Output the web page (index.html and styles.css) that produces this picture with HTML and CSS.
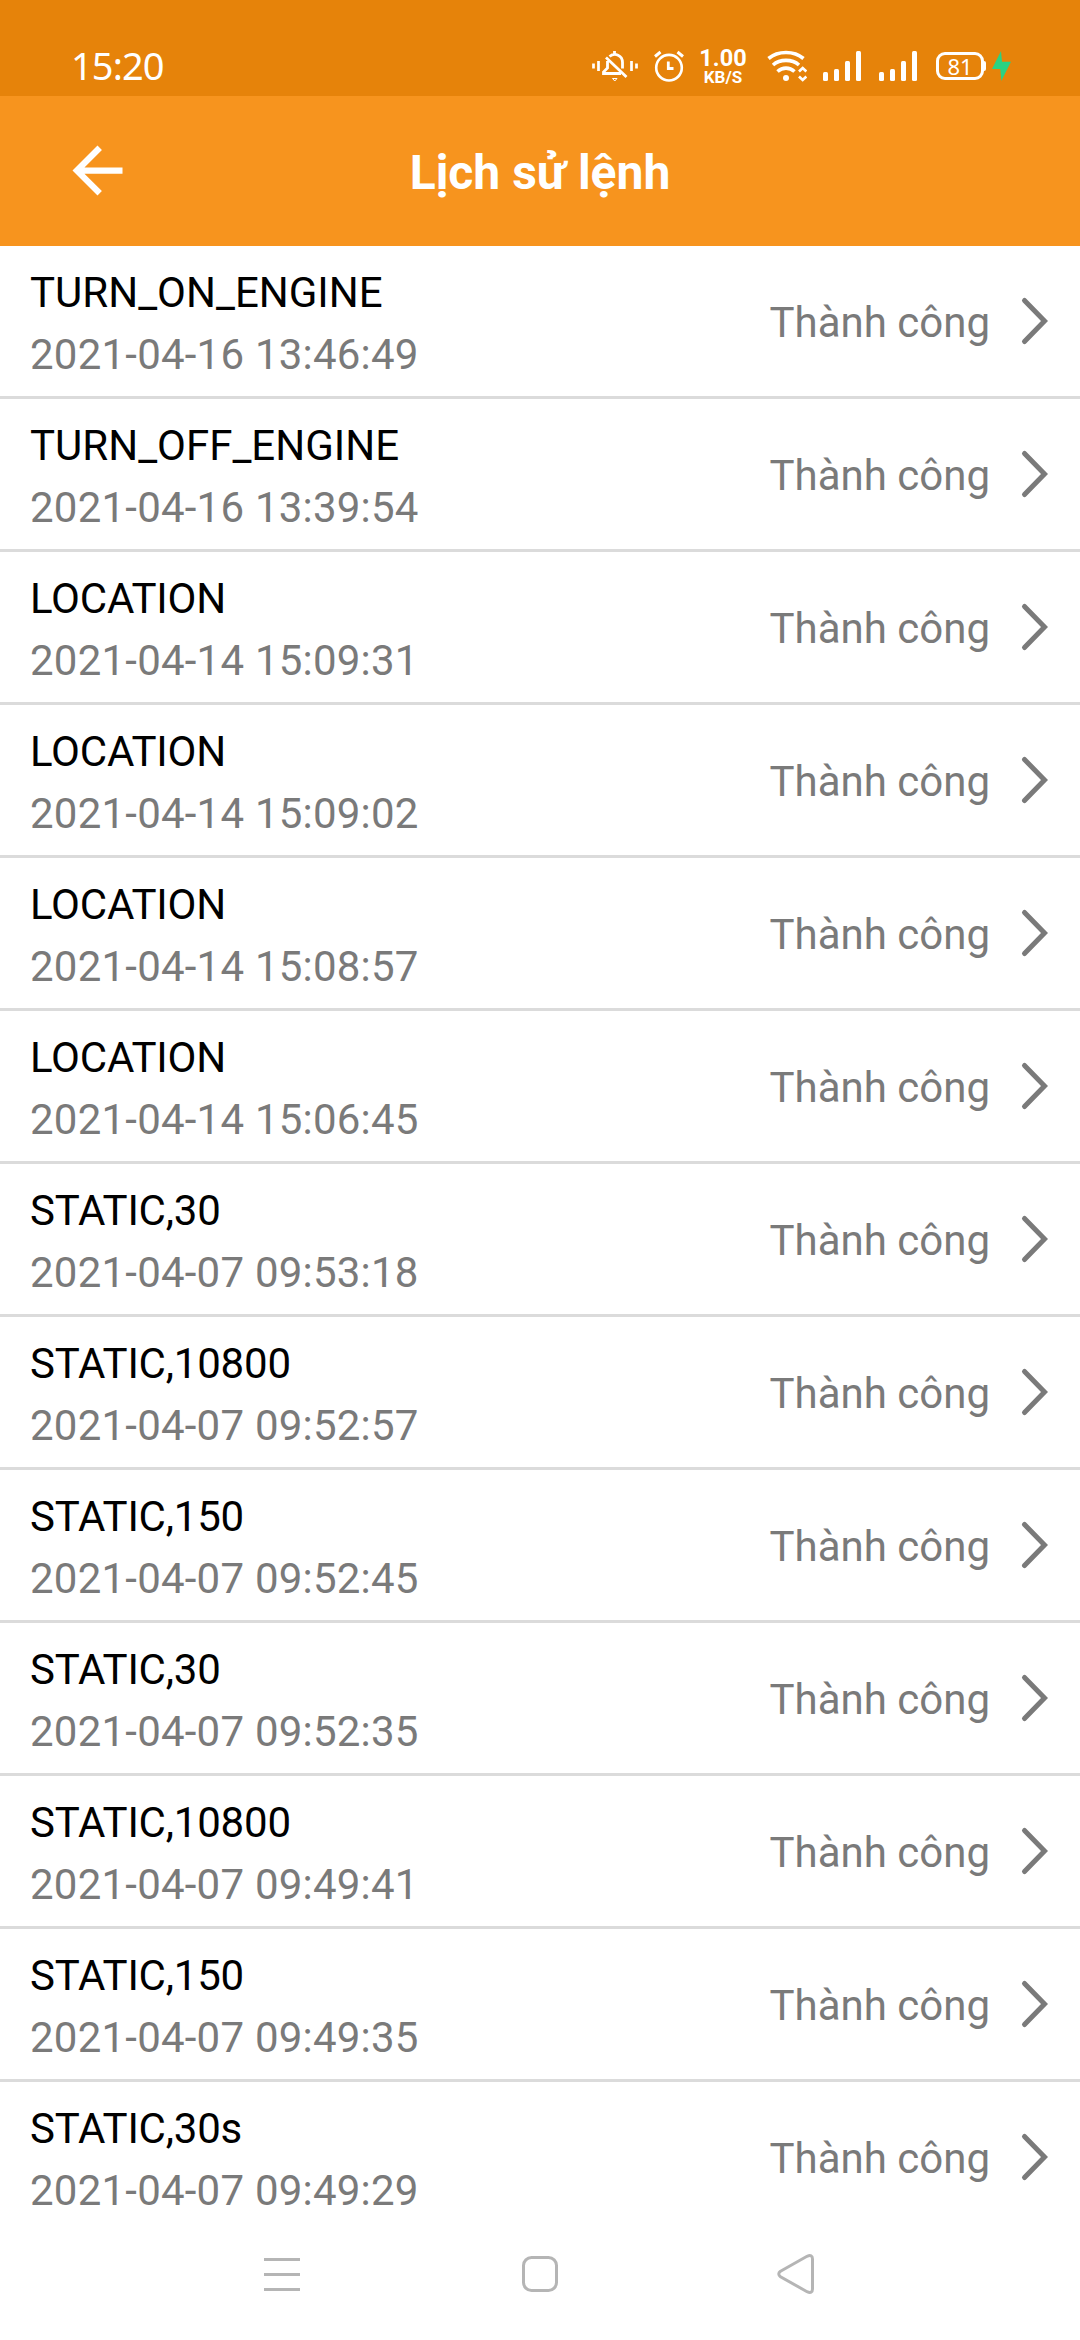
FILE: index.html
```html
<!DOCTYPE html>
<html lang="vi">
<head>
<meta charset="utf-8">
<title>Lịch sử lệnh</title>
<link rel="stylesheet" href="styles.css">
</head>
<body>
<svg class="defs" width="0" height="0" aria-hidden="true">
  <symbol id="chevron" viewBox="0 0 30 50"><path d="M4.500 4.500 24.500 25 4.500 45.500" fill="none" stroke="#7a7a7a" stroke-width="5" stroke-linecap="round" stroke-linejoin="miter"/></symbol>
  <symbol id="signal" viewBox="0 0 38 30"><rect y="21" width="5" height="9" rx="1.500"/><rect x="11" y="18" width="5" height="12" rx="1.500"/><rect x="22" y="10" width="5" height="20" rx="1.500"/><rect x="33" width="5" height="30" rx="1.500"/></symbol>
</svg>
<div class="screen">
  <div class="statusbar">
    <span class="clock">15:20</span>
    <div class="indicators">
      <svg class="bell" viewBox="0 0 46 32" width="46" height="32">
        <path d="M1.500 13.500v5M6.500 11v10M39.500 11v10M44.500 13.500v5" stroke-width="2.700"/>
        <path d="M22.500 1v3M17.500 6.500C23 2 30.500 5.500 30.500 12.500v6M15.500 11v7L11.500 22v1.500H29M14 7.500 34.500 27" stroke-width="2.800"/>
        <path d="M20.500 28.500h4.500l-2.200 2.500z" stroke-width="1"/>
      </svg>
      <svg class="alarm" viewBox="0 0 30 32" width="30" height="32">
        <circle cx="15" cy="17.700" r="12.800" stroke-width="2.600"/>
        <path d="M1 6.500 6.500 2M23.500 2 29 6.500" stroke-width="3"/><path d="M14.300 11.500V18.500H19.500" stroke-width="2.800"/>
      </svg>
      <div class="speed"><b>1.00</b><b class="unit">KB/S</b></div>
      <svg class="wifi" viewBox="0 0 40 32" width="40" height="32">
        <path d="M1.500 8.500C11 .5 27 .5 36.500 8.500M6 15C13 8.800 25 8.800 32 15M10.500 21.500C15.500 17 22.500 17 27.500 21.500" stroke-width="3.600"/>
        <circle cx="19" cy="28" r="3" fill="#fff" stroke="none"/>
        <path d="M32 21.500 35.700 18 39.400 21.500M32 26.500 35.700 30 39.400 26.500" stroke-width="2.700"/>
      </svg>
      <svg class="signal" width="38" height="30"><use href="#signal"/></svg>
      <svg class="signal second" width="38" height="30"><use href="#signal"/></svg>
      <div class="battery">81</div>
      <svg class="bolt" viewBox="0 0 19 30" width="19" height="30"><path d="M9 0 0 18h8.300L9.300 30 19 10.700h-9z"/></svg>
    </div>
  </div>
  <header class="appbar">
    <svg class="back" viewBox="0 0 24 24" width="75" height="75"><path d="M20 11H7.830l5.590-5.590L12 4l-8 8 8 8 1.410-1.410L7.830 13H20z" fill="#fff"/></svg>
    <h1>Lịch sử lệnh</h1>
  </header>
  <main class="list">
    <div class="row"><div class="info"><p>TURN_ON_ENGINE</p><time>2021-04-16 13:46:49</time></div><span class="state">Thành công</span><svg class="chevron"><use href="#chevron"/></svg></div>
    <div class="row"><div class="info"><p>TURN_OFF_ENGINE</p><time>2021-04-16 13:39:54</time></div><span class="state">Thành công</span><svg class="chevron"><use href="#chevron"/></svg></div>
    <div class="row"><div class="info"><p class="tight">LOCATION</p><time>2021-04-14 15:09:31</time></div><span class="state">Thành công</span><svg class="chevron"><use href="#chevron"/></svg></div>
    <div class="row"><div class="info"><p class="tight">LOCATION</p><time>2021-04-14 15:09:02</time></div><span class="state">Thành công</span><svg class="chevron"><use href="#chevron"/></svg></div>
    <div class="row"><div class="info"><p class="tight">LOCATION</p><time>2021-04-14 15:08:57</time></div><span class="state">Thành công</span><svg class="chevron"><use href="#chevron"/></svg></div>
    <div class="row"><div class="info"><p class="tight">LOCATION</p><time>2021-04-14 15:06:45</time></div><span class="state">Thành công</span><svg class="chevron"><use href="#chevron"/></svg></div>
    <div class="row"><div class="info"><p class="tight">STATIC,30</p><time>2021-04-07 09:53:18</time></div><span class="state">Thành công</span><svg class="chevron"><use href="#chevron"/></svg></div>
    <div class="row"><div class="info"><p class="tight">STATIC,10800</p><time>2021-04-07 09:52:57</time></div><span class="state">Thành công</span><svg class="chevron"><use href="#chevron"/></svg></div>
    <div class="row"><div class="info"><p class="tight">STATIC,150</p><time>2021-04-07 09:52:45</time></div><span class="state">Thành công</span><svg class="chevron"><use href="#chevron"/></svg></div>
    <div class="row"><div class="info"><p class="tight">STATIC,30</p><time>2021-04-07 09:52:35</time></div><span class="state">Thành công</span><svg class="chevron"><use href="#chevron"/></svg></div>
    <div class="row"><div class="info"><p class="tight">STATIC,10800</p><time>2021-04-07 09:49:41</time></div><span class="state">Thành công</span><svg class="chevron"><use href="#chevron"/></svg></div>
    <div class="row"><div class="info"><p class="tight">STATIC,150</p><time>2021-04-07 09:49:35</time></div><span class="state">Thành công</span><svg class="chevron"><use href="#chevron"/></svg></div>
    <div class="row"><div class="info"><p class="tight">STATIC,30s</p><time>2021-04-07 09:49:29</time></div><span class="state">Thành công</span><svg class="chevron"><use href="#chevron"/></svg></div>
  </main>
  <nav class="navbar">
    <svg viewBox="0 0 36 36"><path d="M0 3.500h36M0 18.500h36M0 33.500h36"/></svg>
    <svg viewBox="0 0 36 36"><rect x="1.500" y="1.500" width="33" height="33" rx="8"/></svg>
    <svg viewBox="0 0 36 36"><path d="M.5 15.300 27 .3Q32.500-2 32.500 3V33Q32.500 38 27 35.700L.5 20.700Q-3 18 .5 15.300z"/></svg>
  </nav>
</div>
</body>
</html>
```
FILE: styles.css
```css
* {
  box-sizing: border-box;
}

body {
  margin: 0;
  background: #fff;
  font-family: Roboto, sans-serif;
}

svg {
  display: block;
  flex: none;
}

.defs {
  display: none;
}

.screen {
  display: flex;
  flex-direction: column;
  width: 1080px;
  height: 2340px;
  overflow: hidden;
}

.statusbar {
  display: flex;
  flex: none;
  justify-content: space-between;
  height: 96px;
  padding: 34px 69px 0 71px;
  background: #e6830a;
  color: #fff;
}

.clock {
  font: 38px/62px "Noto Sans", sans-serif;
  letter-spacing: -0.9px;
}

.indicators {
  display: flex;
  align-items: flex-start;
  padding-top: 16px;
}

.bell,
.alarm,
.wifi {
  fill: none;
  stroke: #fff;
}

.alarm {
  margin-left: 16px;
}

.speed {
  display: flex;
  flex-direction: column;
  align-items: center;
  width: 50px;
  margin: -3px 0 0 14px;
  font-size: 23.5px;
  line-height: 22px;
}

.unit {
  font-size: 17px;
  line-height: 16px;
}

.wifi {
  margin-left: 19px;
}

.signal {
  margin: 1px 0 0 16px;
  fill: #fff;
}

.signal.second {
  margin-left: 18px;
}

.battery {
  position: relative;
  width: 48px;
  height: 28px;
  margin: 2px 0 0 19px;
  border: 3px solid #fff;
  border-radius: 9px;
  font: 22px/22px "Noto Sans", sans-serif;
  text-align: center;
}

.battery::after {
  content: "";
  position: absolute;
  top: 6px;
  right: -5px;
  width: 3px;
  height: 10px;
  border-radius: 0 2px 2px 0;
  background: #fff;
}

.bolt {
  margin: 1px 0 0 8px;
  fill: #2bd282;
}

.appbar {
  display: grid;
  flex: none;
  grid-template-columns: 75px 1fr 75px;
  align-items: center;
  height: 150px;
  padding: 0 60px;
  background: #f7941e;
  color: #fff;
}

.back {
  margin-top: -1px;
}

.appbar h1 {
  margin: 0;
  padding-top: 3px;
  font-size: 48px;
  font-weight: 700;
  text-align: center;
}

.list {
  flex: 1;
  min-height: 0;
}

.row {
  display: flex;
  align-items: center;
  height: 153px;
  padding: 0 30px;
  border-bottom: 3px solid #dbdbdb;
  font-size: 42px;
  line-height: 62px;
}

.row:last-child {
  border-bottom-color: transparent;
}

.info {
  flex: 1;
  padding-top: 5px;
}

.info p {
  margin: 0;
  color: #000;
}

.info .tight {
  letter-spacing: -0.2px;
}

.info time {
  display: block;
  color: #7a7a7a;
  letter-spacing: 0.22px;
}

.state {
  padding-top: 3px;
  color: #7a7a7a;
}

.chevron {
  width: 30px;
  height: 50px;
  margin-left: 30px;
}

.navbar {
  display: flex;
  flex: none;
  align-items: center;
  justify-content: space-between;
  height: 132px;
  padding: 0 264px;
}

.navbar svg {
  width: 36px;
  height: 36px;
  overflow: visible;
  fill: none;
  stroke: #b5b5b5;
  stroke-width: 3;
}
```
